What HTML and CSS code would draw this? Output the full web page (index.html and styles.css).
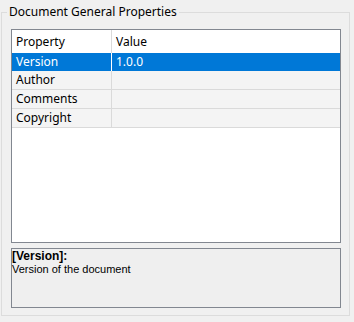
FILE: index.html
```html
<!DOCTYPE html>
<html lang="en">
<head>
    <meta charset="UTF-8">
    <title>Document General Properties</title>
    <link rel="stylesheet" href="styles.css">
</head>
<body>
    <fieldset class="group">
        <legend>Document General Properties</legend>

        <div class="grid">
            <div class="row header">
                <div class="cell name">Property</div>
                <div class="cell value">Value</div>
            </div>
            <div class="row selected">
                <div class="cell name">Version</div>
                <div class="cell value">1.0.0</div>
            </div>
            <div class="row">
                <div class="cell name">Author</div>
                <div class="cell value"></div>
            </div>
            <div class="row">
                <div class="cell name">Comments</div>
                <div class="cell value"></div>
            </div>
            <div class="row">
                <div class="cell name">Copyright</div>
                <div class="cell value"></div>
            </div>
        </div>

        <div class="description">
            <div class="desc-title">[Version]:</div>
            <div class="desc-text">Version of the document</div>
        </div>
    </fieldset>
</body>
</html>
```

FILE: styles.css
```css
* {
    box-sizing: border-box;
}

body {
    margin: 0;
    background: #f0f0f0;
    font-family: "Noto Sans", "Open Sans", sans-serif;
    font-size: 12px;
    color: #000;
    height: 322px;
}

.group {
    margin: 4px 4px 0 1px;
    height: 312px;
    border: 1px solid #dcdcdc;
    padding: 9px 8px 7px 9px;
    display: flex;
    flex-direction: column;
    gap: 5px;
}

.group legend {
    margin-left: -4px;
    padding: 0 2px;
    line-height: 16px;
}

.grid {
    height: 214px;
    background: #fff;
    border: 1px solid #828790;
}

.row {
    display: flex;
    height: 19px;
    background: #f4f4f4;
    border-bottom: 1px solid #dadada;
}

.row.header {
    height: 23px;
    background: #fff;
    border-bottom: none;
}

.row.selected {
    height: 18px;
    background: #0078d7;
    color: #fff;
    border-bottom: none;
}

.cell {
    line-height: 18px;
    padding-left: 4px;
}

.header .cell {
    line-height: 23px;
}

.cell.name {
    width: 100px;
    border-right: 1px solid #dadada;
}

.selected .cell.name {
    border-right-color: #fff;
}

.cell.value {
    flex: 1;
}

.description {
    height: 60px;
    border: 1px solid #828790;
    background: #efefef;
    padding: 0;
    font-family: "Liberation Sans", Arial, sans-serif;
}

.desc-title {
    font-weight: bold;
    line-height: 14px;
}

.desc-text {
    font-size: 11px;
    line-height: 13px;
}
```
